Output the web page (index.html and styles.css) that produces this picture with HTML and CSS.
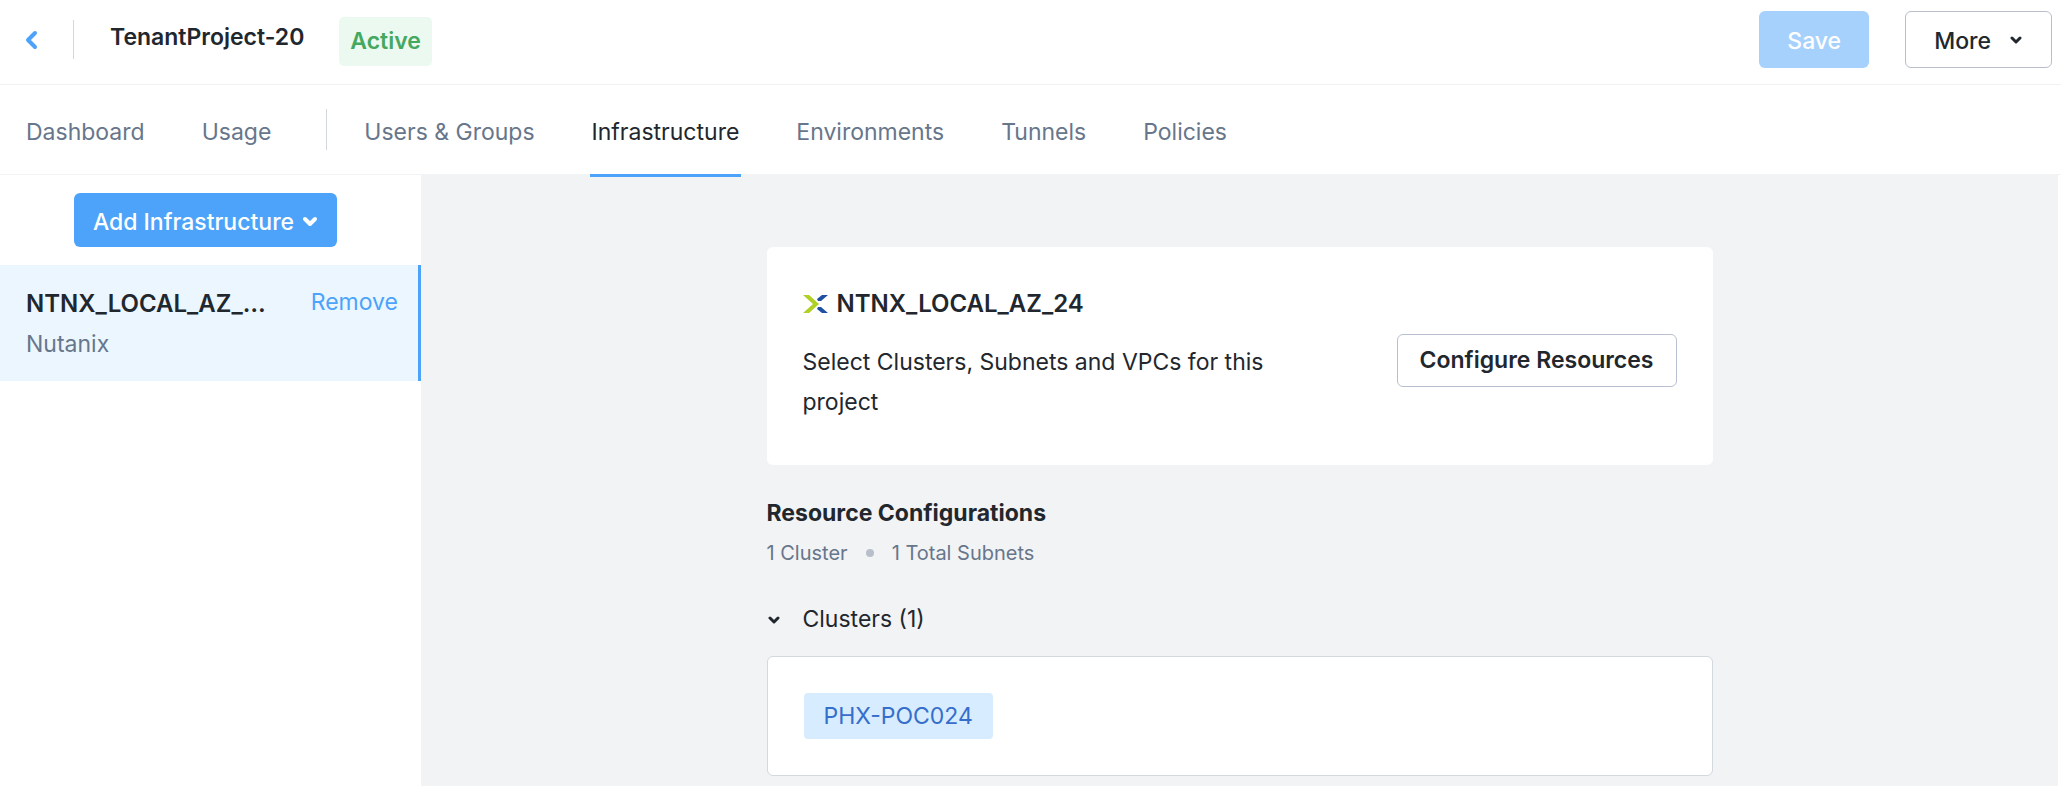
FILE: index.html
```
<!DOCTYPE html>
<html lang="en">
<head>
<meta charset="utf-8">
<meta name="viewport" content="width=device-width, initial-scale=1">
<title>TenantProject-20 – Infrastructure</title>
<link rel="stylesheet" href="styles.css">
</head>
<body>
<header class="header">
  <button class="back" type="button" aria-label="Back">
    <svg width="14" height="20" viewBox="0 0 14 20" aria-hidden="true"><path d="M10 3 L3 10 L10 17"/></svg>
  </button>
  <span class="divider"></span>
  <h1 class="project-name">TenantProject-20</h1>
  <span class="status">Active</span>
  <div class="header-actions">
    <button class="btn btn-save" type="button" disabled>Save</button>
    <button class="btn btn-more" type="button">More
      <svg class="chevron" width="14" height="10" viewBox="0 0 14 10" aria-hidden="true"><path d="M3 2 L7 6 L11 2"/></svg>
    </button>
  </div>
</header>

<nav class="tabs" aria-label="Project">
  <a class="tab" href="#dashboard">Dashboard</a>
  <a class="tab" href="#usage">Usage</a>
  <span class="tab-divider"></span>
  <a class="tab" href="#users">Users &amp; Groups</a>
  <a class="tab tab-active" href="#infrastructure" aria-current="page">Infrastructure</a>
  <a class="tab" href="#environments">Environments</a>
  <a class="tab" href="#tunnels">Tunnels</a>
  <a class="tab" href="#policies">Policies</a>
</nav>

<div class="layout">
  <aside class="sidebar">
    <button class="btn btn-add" type="button">Add Infrastructure
      <svg class="chevron chevron-bold" width="16" height="12" viewBox="0 0 16 12" aria-hidden="true"><path d="M3 3 L8 8 L13 3"/></svg>
    </button>
    <div class="account">
      <div class="account-text">
        <div class="account-name">NTNX_LOCAL_AZ_24</div>
        <div class="account-type">Nutanix</div>
      </div>
      <button class="remove" type="button">Remove</button>
    </div>
  </aside>

  <main class="main">
    <div class="content">
      <section class="card">
        <div class="card-text">
          <h2 class="card-title">
            <svg width="25" height="20" viewBox="0 0 25 20" aria-hidden="true">
              <path fill="#b1d025" d="M0 1 H6 L16 10 L6 19 H0 L10 10 Z"/>
              <path fill="#1f4fa3" d="M19 1 H25 L18 7 H15 L14 5 Z M14 15 L15 13 H18 L25 19 H19 Z"/>
            </svg>
            NTNX_LOCAL_AZ_24
          </h2>
          <p class="card-desc">Select Clusters, Subnets and VPCs for this project</p>
        </div>
        <button class="btn btn-configure" type="button">Configure Resources</button>
      </section>

      <h3 class="section-title">Resource Configurations</h3>
      <div class="summary"><span>1 Cluster</span><span class="dot"></span><span>1 Total Subnets</span></div>

      <button class="group-toggle" type="button" aria-expanded="true">
        <svg class="chevron" width="14" height="10" viewBox="0 0 14 10" aria-hidden="true"><path d="M3 4 L7 8 L11 4"/></svg>
        Clusters (1)
      </button>
      <div class="cluster-box"><span class="chip">PHX-POC024</span></div>
    </div>
  </main>
</div>
</body>
</html>
```
FILE: styles.css
```
* {
  box-sizing: border-box;
}

body {
  margin: 0;
  min-height: 100vh;
  display: flex;
  flex-direction: column;
  background: #fff;
  color: #22272e;
  font-family: Inter, "Liberation Sans", sans-serif;
  font-size: 23px;
  line-height: 40px;
}

button {
  font: inherit;
  color: inherit;
  margin: 0;
  padding: 0;
  border: 0;
  background: none;
  cursor: pointer;
}

h1, h2, h3, p {
  margin: 0;
  font-size: inherit;
}

.btn {
  display: inline-flex;
  align-items: center;
  justify-content: center;
  border-radius: 6px;
  white-space: nowrap;
}

.chevron {
  flex: none;
  fill: none;
  stroke: currentColor;
  stroke-width: 3;
  stroke-linecap: round;
  stroke-linejoin: round;
}

.chevron-bold {
  stroke-width: 4;
}

/* Header */
.header {
  display: flex;
  align-items: flex-start;
  height: 85px;
  padding: 0 9px 0 25px;
  border-bottom: 1px solid #f0f1f3;
}

.back {
  display: flex;
  padding-top: 30px;
  color: #4da3f9;
}

.back svg {
  fill: none;
  stroke: currentColor;
  stroke-width: 4;
  stroke-linecap: round;
  stroke-linejoin: round;
}

.divider {
  width: 1px;
  height: 39px;
  margin: 20px 36px 0 34px;
  background: #d3d6dd;
}

.project-name {
  padding-top: 17px;
  font-weight: 600;
  white-space: nowrap;
}

.status {
  margin: 17px 0 0 35px;
  padding: 4px 11px 5px;
  border-radius: 5px;
  background: #ebf9f0;
  color: #45a861;
  font-weight: 600;
}

.header-actions {
  display: flex;
  gap: 36px;
  margin: 11px 0 0 auto;
}

.btn-save,
.btn-more {
  height: 57px;
  padding: 2px 28px 0;
  font-weight: 500;
}

.btn-save {
  background: #a6d1fd;
  color: #fff;
}

.btn-more {
  gap: 18px;
  border: 1px solid #b8bfca;
}

/* Tabs */
.tabs {
  position: relative;
  z-index: 1;
  display: flex;
  align-items: stretch;
  gap: 53px;
  height: 90px;
  padding: 0 24px;
  border-bottom: 1px solid #f2f3f5;
}

.tab {
  margin-bottom: -3px;
  padding: 27px 2px 0;
  border-bottom: 3px solid transparent;
  color: #67768b;
  text-decoration: none;
  white-space: nowrap;
}

.tab-active {
  border-bottom-color: #4da3f9;
  color: #22272e;
}

.tab-divider {
  width: 1px;
  height: 41px;
  margin: 24px -18px 0 0;
  background: #d3d6dd;
}

/* Page body */
.layout {
  display: flex;
  flex: 1;
}

.sidebar {
  display: flex;
  flex-direction: column;
  align-items: center;
  flex: none;
  width: 421px;
  padding-top: 18px;
}

.btn-add {
  height: 54px;
  gap: 8px;
  margin-right: 10px;
  padding: 3px 19px 0;
  background: #4da3f9;
  color: #fff;
  font-weight: 500;
}

.account {
  display: flex;
  align-items: flex-start;
  justify-content: space-between;
  width: 100%;
  margin-top: 18px;
  padding: 19px 20px 17px 26px;
  border-right: 3px solid #4da3f9;
  background: #ebf6ff;
}

.account-text {
  width: 240px;
}

.account-name {
  overflow: hidden;
  font-size: 24px;
  font-weight: 600;
  text-overflow: ellipsis;
  white-space: nowrap;
}

.account-type {
  color: #67768b;
}

.remove {
  height: 36px;
  line-height: 36px;
  color: #4da3f9;
}

.main {
  flex: 1;
  margin-right: 3px;
  padding: 72px 24px 10px;
  background: #f2f3f5;
}

.content {
  max-width: 946px;
  margin: 0 auto;
}

.card {
  display: flex;
  align-items: center;
  justify-content: space-between;
  padding: 37px 36px 43px;
  border-radius: 6px;
  background: #fff;
}

.card-text {
  max-width: 480px;
}

.card-title {
  display: flex;
  align-items: center;
  gap: 9px;
  font-size: 24px;
  font-weight: 600;
  white-space: nowrap;
}

.card-desc {
  margin-top: 18px;
}

.btn-configure {
  height: 53px;
  margin-top: 14px;
  padding: 0 22px;
  border: 1px solid #b8bfd0;
  font-weight: 600;
}

.section-title {
  margin-top: 28px;
  font-weight: 700;
}

.summary {
  display: flex;
  align-items: center;
  gap: 18px;
  color: #67768b;
  font-size: 20px;
}

.dot {
  width: 8px;
  height: 8px;
  border-radius: 50%;
  background: #b8bfca;
}

.group-toggle {
  display: flex;
  align-items: center;
  gap: 22px;
  margin-top: 26px;
}

.cluster-box {
  display: flex;
  margin-top: 17px;
  padding: 36px;
  border: 1px solid #d3d7de;
  border-radius: 6px;
  background: #fff;
}

.chip {
  padding: 3px 20px;
  border-radius: 4px;
  background: #d7ecfe;
  color: #366ecb;
}
```
